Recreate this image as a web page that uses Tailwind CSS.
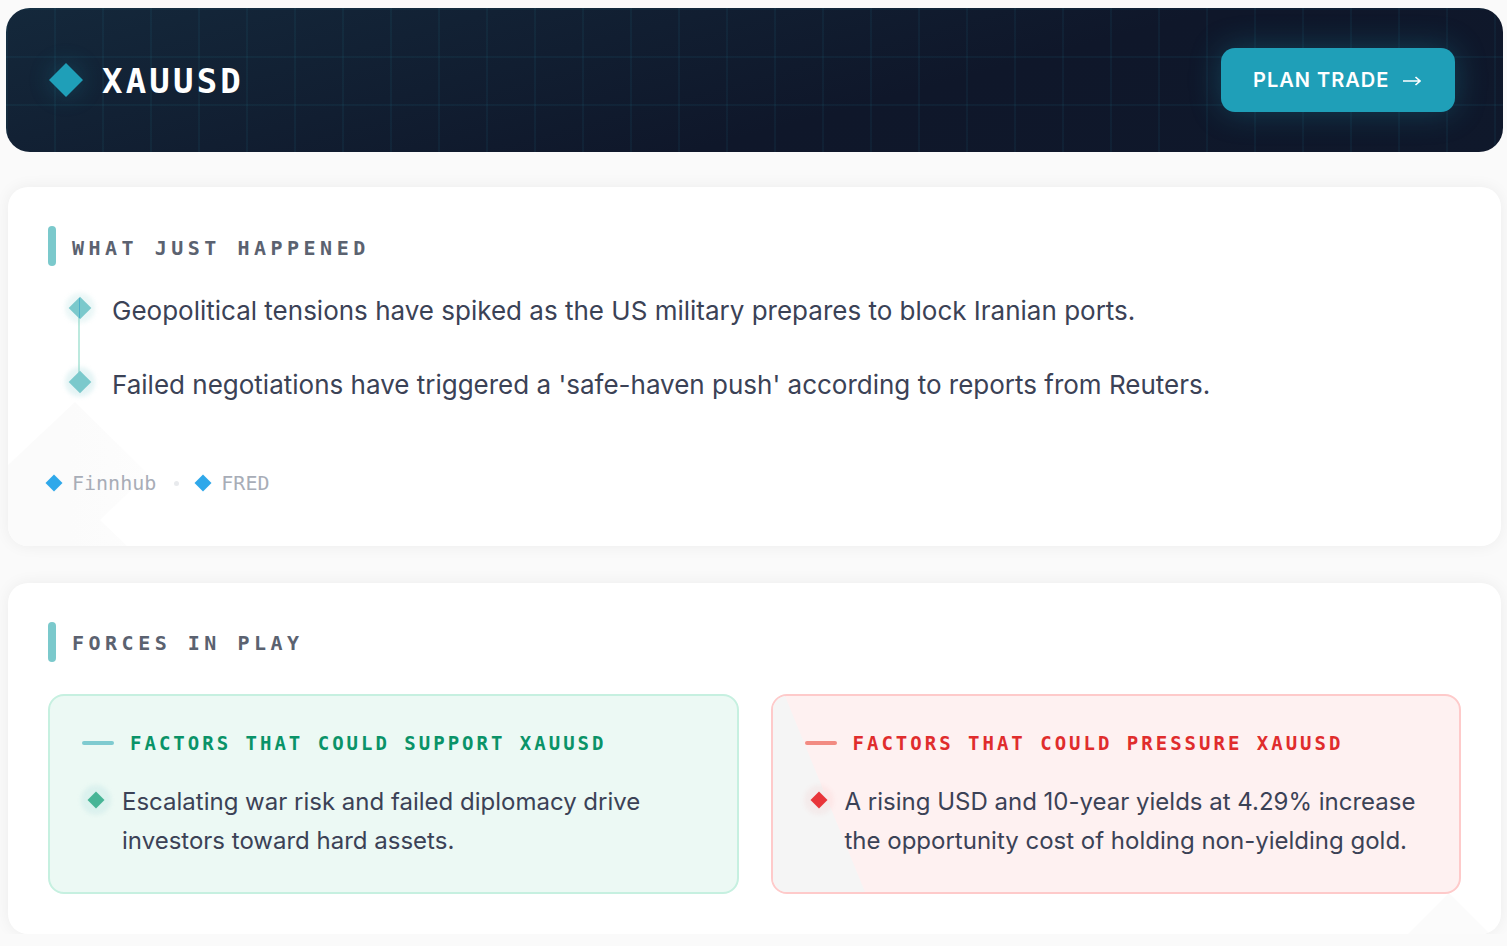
<!DOCTYPE html>
<html lang="en">
<head>
    <meta charset="UTF-8">
    <meta name="viewport" content="width=device-width, initial-scale=1.0">
    <title>XAUUSD</title>
    <script src="https://cdn.jsdelivr.net/npm/@tailwindcss/browser@4"></script>
</head>
<body class="bg-[#fafafa] font-['Inter',sans-serif] text-[#3b4256] overflow-hidden">
    <div class="pt-2 pl-[6px] pr-[4px]">

        <!-- header -->
        <header class="relative h-[144px] rounded-[24px] overflow-hidden bg-[linear-gradient(165deg,#14283b_0%,#0f172a_60%,#0f182b_100%)] flex items-center justify-between pl-[48px] pr-[48px]">
            <div class="absolute inset-0 bg-[linear-gradient(to_right,rgba(34,160,185,0.07)_2px,transparent_2px),linear-gradient(to_bottom,rgba(34,160,185,0.07)_2px,transparent_2px)] bg-[size:48px_48px]"></div>
            <div class="relative flex items-center gap-6">
                <span class="w-6 h-6 rotate-45 bg-[#1f9fb8] shadow-[0_0_24px_rgba(31,159,184,0.3)]"></span>
                <h1 class="translate-y-px font-['DejaVu_Sans_Mono',monospace] font-bold text-[34px] leading-none tracking-[3.2px] text-white">XAUUSD</h1>
            </div>
            <button class="relative h-16 w-[234px] rounded-[14px] bg-[#1f9fb8] shadow-[0_0_32px_rgba(31,159,184,0.3)] flex items-center pl-8 text-white font-semibold text-[20px] tracking-[1px]">
                PLAN TRADE
                <svg class="ml-[14px] mt-px" width="18" height="12" viewBox="0 0 18 12" fill="none" stroke="currentColor" stroke-width="1.6"><path d="M0 6h17M12.500 2l4.500 4-4.500 4"/></svg>
            </button>
        </header>

        <!-- what just happened -->
        <section class="relative mx-[2px] mt-[35px] h-[359px] rounded-[20px] bg-white shadow-[0_0_16px_rgba(0,0,0,0.06)] overflow-hidden px-10 pt-[39px]">
            <svg class="absolute left-0 top-0" width="200" height="359" viewBox="8 187 200 359">
                <defs><linearGradient id="fade" gradientUnits="userSpaceOnUse" x1="70" y1="0" x2="150" y2="0"><stop offset="0" stop-color="#fbfbfb"/><stop offset="1" stop-color="#fdfdfd"/></linearGradient></defs>
                <polygon points="75,402 148,474 100,520 127,546 8,546 8,465" fill="url(#fade)"/>
            </svg>
            <div class="relative flex items-center gap-4">
                <span class="w-2 h-10 rounded-full bg-[#7bc9cc]"></span>
                <h2 class="translate-y-[2px] font-['DejaVu_Sans_Mono',monospace] font-bold text-[20px] tracking-[4.5px] text-[#5b6270]">WHAT JUST HAPPENED</h2>
            </div>
            <ul class="relative mt-[25px] pl-[64px] text-[26px] leading-[40px] space-y-[34px]">
                <li class="relative">
                    <span class="absolute -left-[34px] top-[16px] w-[2px] h-[66px] bg-[#bce9de]"></span>
                    <span class="absolute -left-[47px] top-[2px] w-[30px] h-[30px] rounded-full bg-[#7bc9cc]/15 blur-[2px]"></span>
                    <span class="absolute -left-[40px] top-[9px] w-4 h-4 rotate-45 bg-[#7bc9cc]"></span>
                    <span class="absolute -left-[33px] top-[7px] w-px h-5 bg-[#3aa6c9]/70"></span>
                    Geopolitical tensions have spiked as the US military prepares to block Iranian ports.
                </li>
                <li class="relative">
                    <span class="absolute -left-[47px] top-[2px] w-[30px] h-[30px] rounded-full bg-[#7bc9cc]/20 blur-[2px]"></span>
                    <span class="absolute -left-[40px] top-[9px] w-4 h-4 rotate-45 bg-[#7bc9cc]"></span>
                    Failed negotiations have triggered a 'safe-haven push' according to reports from Reuters.
                </li>
            </ul>
            <div class="relative mt-[66px] flex items-center font-['DejaVu_Sans_Mono',monospace] text-[20px] leading-6 text-[#a8adb7]">
                <span class="w-3 h-3 rotate-45 bg-[#2fa8ea]"></span>
                <span class="ml-3">Finnhub</span>
                <span class="ml-[18px] w-[5px] h-[5px] rounded-full bg-[#e8eaed]"></span>
                <span class="ml-[18px] w-3 h-3 rotate-45 bg-[#2fa8ea]"></span>
                <span class="ml-3">FRED</span>
            </div>
        </section>

        <!-- forces in play -->
        <section class="relative mx-[2px] mt-[37px] h-[351px] rounded-[20px] bg-white shadow-[0_0_16px_rgba(0,0,0,0.06)] overflow-hidden px-10 pt-[39px]">
            <svg class="absolute right-0 bottom-0" width="100" height="41" viewBox="1401 893 100 41"><polygon points="1449,893 1490,934 1408,934" fill="#fbfbfb"/></svg>
            <div class="relative flex items-center gap-4">
                <span class="w-2 h-10 rounded-full bg-[#7bc9cc]"></span>
                <h2 class="translate-y-px font-['DejaVu_Sans_Mono',monospace] font-bold text-[20px] tracking-[4.5px] text-[#5b6270]">FORCES IN PLAY</h2>
            </div>
            <div class="relative mt-8 grid grid-cols-2 gap-8">
                <div class="h-[200px] rounded-2xl border-2 border-[#c6f0e0] bg-[#ecf9f4] px-8 pt-8">
                    <div class="flex items-center gap-4 h-[30px]">
                        <span class="w-8 h-1 rounded-full bg-[#7fcbd0]"></span>
                        <h3 class="font-['DejaVu_Sans_Mono',monospace] font-bold text-[19px] tracking-[3px] text-[#0a9368]">FACTORS THAT COULD SUPPORT XAUUSD</h3>
                    </div>
                    <div class="relative mt-6 pl-10 text-[24px] leading-[39px]">
                        <span class="absolute -left-px top-[3px] w-[30px] h-[30px] rounded-full bg-[#7fcbd0]/15 blur-[2px]"></span>
                        <span class="absolute left-[8px] top-[12px] w-3 h-3 rotate-45 bg-[#47b596]"></span>
                        Escalating war risk and failed diplomacy drive investors toward hard assets.
                    </div>
                </div>
                <div class="relative h-[200px] rounded-2xl border-2 border-[#fecaca] bg-[#fef1f1] px-8 pt-8 overflow-hidden">
                    <svg class="absolute left-0 top-0" width="100" height="196" viewBox="0 0 100 196"><polygon points="12,0 92,196 0,196 0,0" fill="#f5f5f5"/></svg>
                    <div class="relative flex items-center gap-4 h-[30px]">
                        <span class="w-8 h-1 rounded-full bg-[#f28b82]"></span>
                        <h3 class="font-['DejaVu_Sans_Mono',monospace] font-bold text-[19px] tracking-[3px] text-[#e02d2d]">FACTORS THAT COULD PRESSURE XAUUSD</h3>
                    </div>
                    <div class="relative mt-6 pl-10 text-[24px] leading-[39px]">
                        <span class="absolute -left-px top-[3px] w-[30px] h-[30px] rounded-full bg-[#e8353a]/5 blur-[2px]"></span>
                        <span class="absolute left-[8px] top-[12px] w-3 h-3 rotate-45 bg-[#e8353a]"></span>
                        A rising USD and 10-year yields at 4.29% increase the opportunity cost of holding non-yielding gold.
                    </div>
                </div>
            </div>
        </section>
    </div>
</body>
</html>
